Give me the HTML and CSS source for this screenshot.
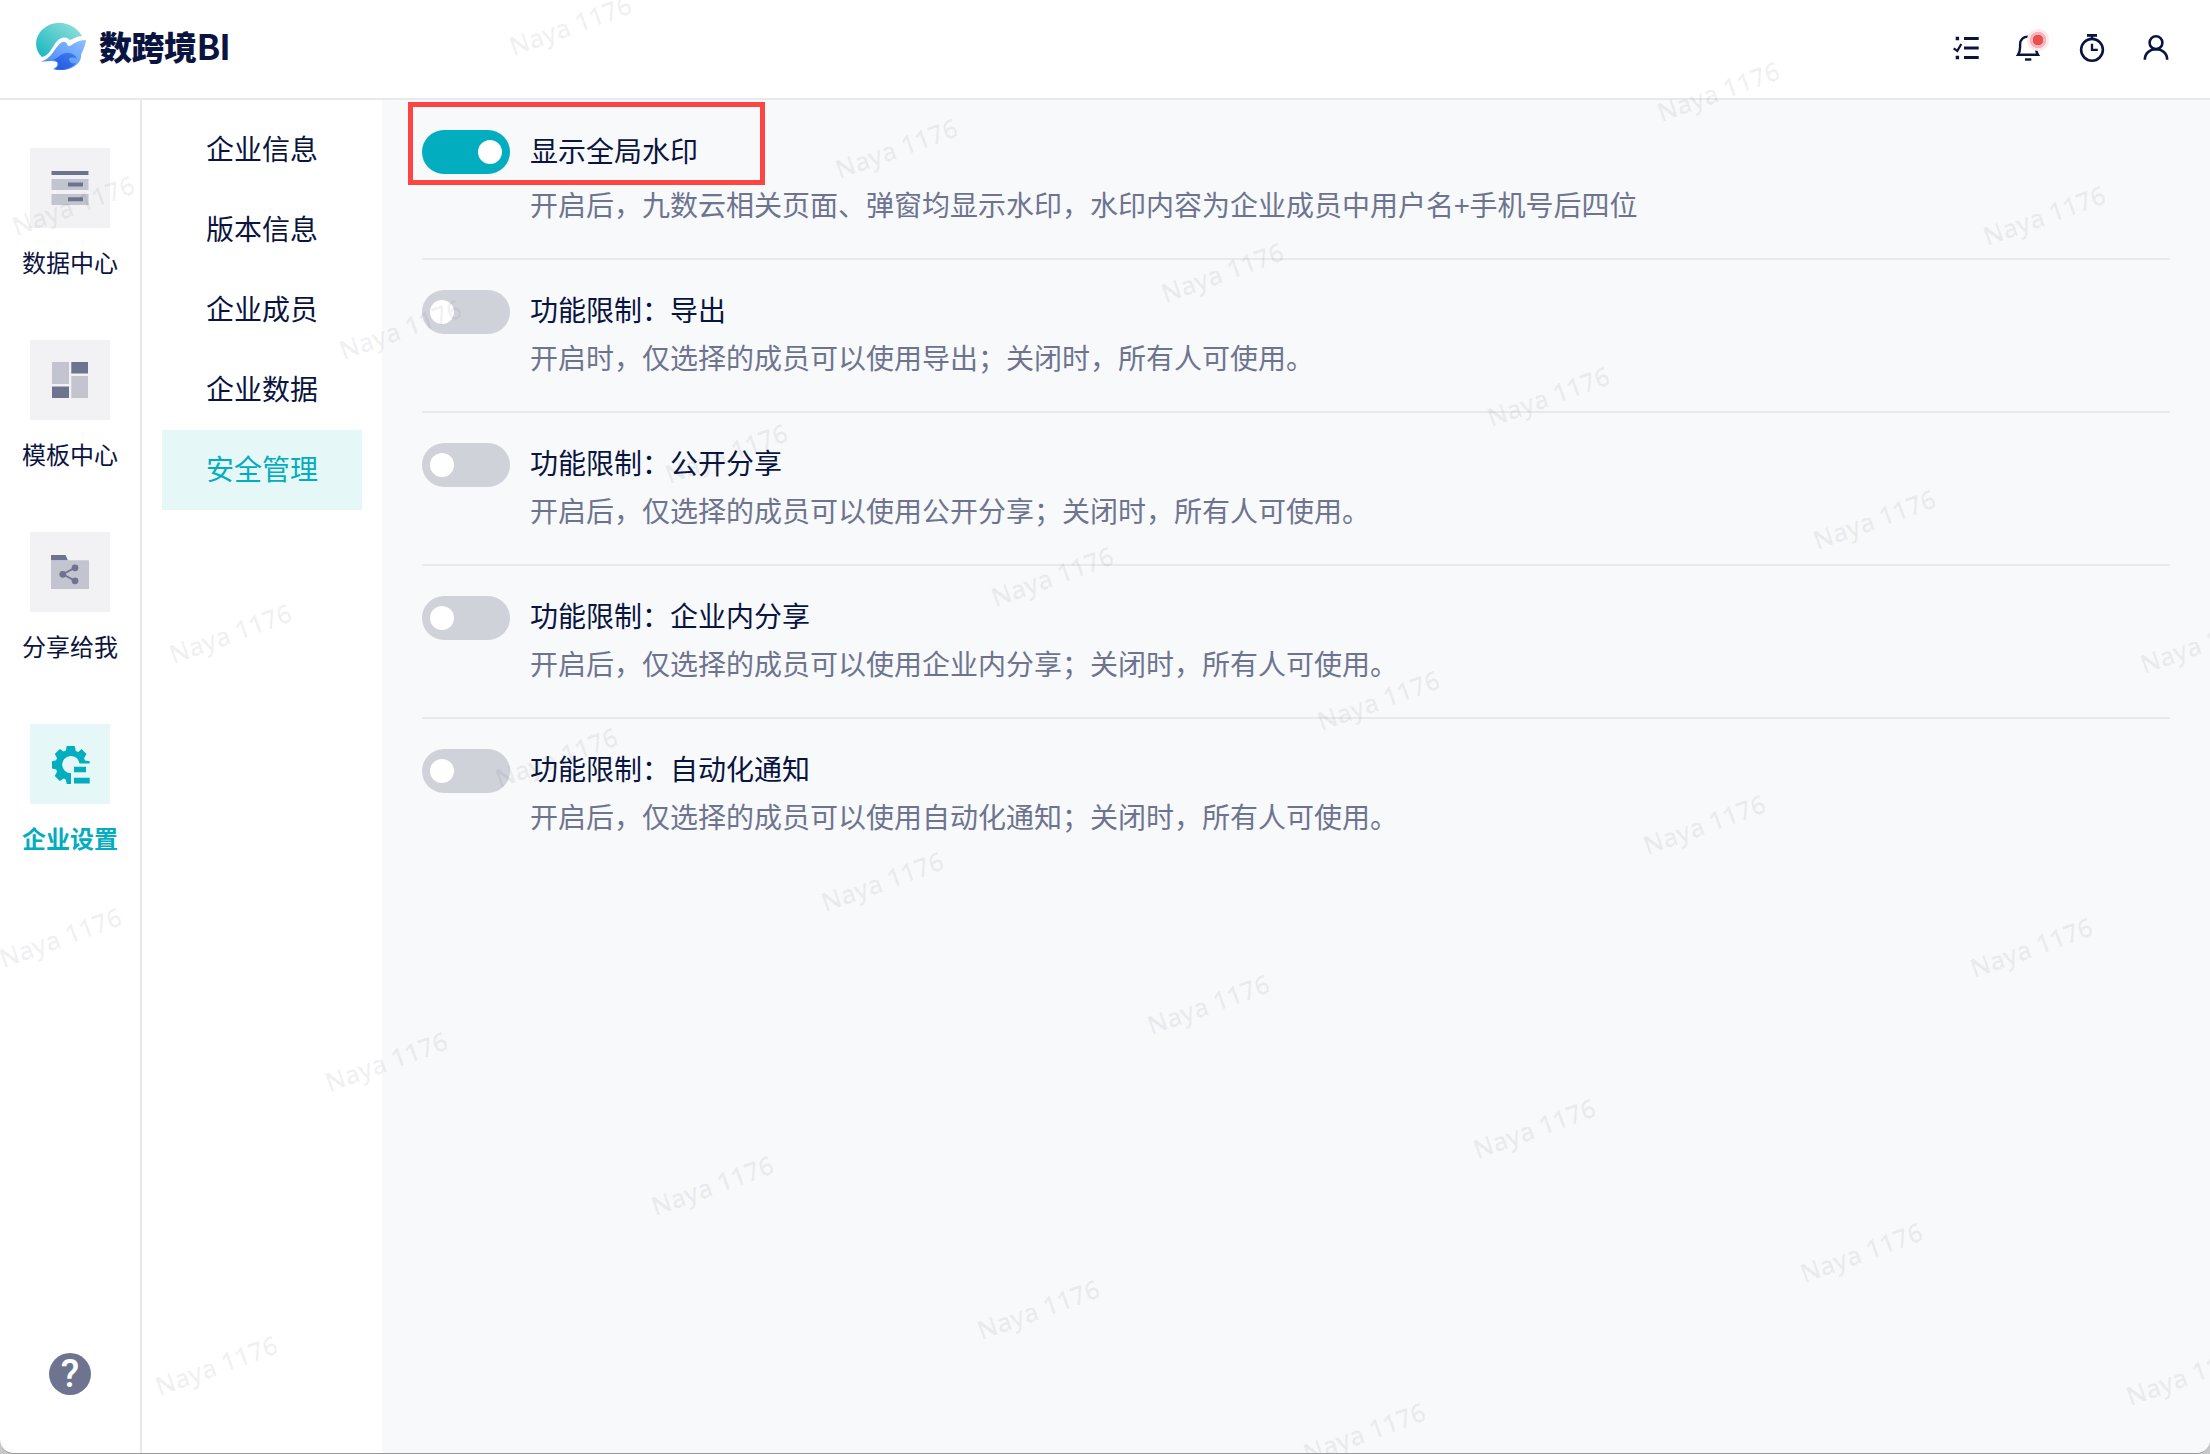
FILE: index.html
```html
<!DOCTYPE html>
<html lang="zh-CN">
<head>
    <meta charset="UTF-8">
    <meta name="viewport" content="width=device-width, initial-scale=1.0">
    <title>数跨境BI</title>
    <link rel="stylesheet" href="styles.css">
</head>
<body>
    <div class="window">
        <header class="header">
            <div class="logo">
                <svg class="logo-mark" viewBox="0 0 52 50">
                    <defs>
                        <linearGradient id="sky" x1="0" y1="1" x2="1" y2="0">
                            <stop offset="0" stop-color="#12b5c0"></stop>
                            <stop offset="1" stop-color="#9be3dc"></stop>
                        </linearGradient>
                        <linearGradient id="wave" x1="0" y1="1" x2="1" y2="0">
                            <stop offset="0" stop-color="#3b83f7"></stop>
                            <stop offset="1" stop-color="#8fc0ff"></stop>
                        </linearGradient>
                        <linearGradient id="deep" x1="0" y1="1" x2="1" y2="0">
                            <stop offset="0" stop-color="#2456e0"></stop>
                            <stop offset="1" stop-color="#3f7df0"></stop>
                        </linearGradient>
                    </defs>
                    <path d="M7 35 C-1 28 -1 15 8 7 C20 -4 39 0 47 14 C42 14 38 17 35 18 C31 14 26 15 22 19 C17 25 15 33 7 35 Z" fill="url(#sky)"></path>
                    <path d="M6 39.5 C16 37 19 27 25 21.5 C29 18 32 20 33 24 C36 25 40 18 51 18 C50 25 48 28 46 33 C47 41 37 48 27 48 C22 48 20 48 18 47 C22 45 23 43 22 40 C17 38 12 40 6 39.5 Z" fill="url(#wave)"></path>
                    <path d="M18 38 C24 36 25 31 33 31 C38 31 41 34 42 37 C38 35 34 35 34 38 C35 41 38 42 41 41 C36 47 28 49 20 47 C25 44 25 40 18 38 Z" fill="url(#deep)"></path>
                </svg>
                <span class="logo-text">数跨境<span class="logo-latin">BI</span></span>
            </div>
            <div class="tools">
                <svg class="tool-icon" viewBox="0 0 30 30">
                    <path d="M15 5.5H29.7 M15 15H29.7 M15 24.5H29.7" stroke="#0a1440" stroke-width="3.2"></path>
                    <path d="M6.7 3.8h3.4v3.4H6.7z M6.7 22.8h3.4v3.4H6.7z" fill="#0a1440"></path>
                    <path d="M4.7 15.3L8.3 17.8L12.3 11" fill="none" stroke="#0a1440" stroke-width="2.2"></path>
                </svg>
                <div class="bell">
                    <svg class="tool-icon" viewBox="0 0 30 30">
                        <path d="M5 21.8H25C23.5 19.5 22.9 17 22.9 14V11.5C22.9 6.5 19.5 3.6 15 3.6S7.1 6.5 7.1 11.5V14C7.1 17 6.5 19.5 5 21.8Z" fill="none" stroke="#0a1440" stroke-width="2.4"></path>
                        <path d="M12 26.5H18.3" stroke="#0a1440" stroke-width="2.4"></path>
                    </svg>
                    <span class="bell-dot"></span>
                </div>
                <svg class="tool-icon" viewBox="0 0 30 30">
                    <circle cx="15" cy="16.8" r="10.9" fill="none" stroke="#0a1440" stroke-width="2.6"></circle>
                    <path d="M10 2.4H20" fill="none" stroke="#0a1440" stroke-width="2.8"></path>
                    <path d="M15 3V6 M15 10.8V16.8H20.8" fill="none" stroke="#0a1440" stroke-width="2.3"></path>
                </svg>
                <svg class="tool-icon" viewBox="0 0 30 30">
                    <circle cx="15" cy="9.7" r="6.4" fill="none" stroke="#0a1440" stroke-width="2.6"></circle>
                    <path d="M3.8 26.8C3.8 20 9 16.2 15 16.2S26.2 20 26.2 26.8" fill="none" stroke="#0a1440" stroke-width="2.6"></path>
                </svg>
            </div>
        </header>

        <div class="body">
            <nav class="rail">
                <a class="rail-item">
                    <span class="rail-icon">
                        <svg viewBox="0 0 40 40">
                            <path d="M1.5 3H38.5V7H1.5z" fill="#6e748f"></path>
                            <path d="M1.5 11H38.5V22H1.5z M1.5 26H38.5V37H1.5z" fill="#c2c4d0"></path>
                            <path d="M18 14.5H33V18.5H18z M18 29.3H33V33.3H18z" fill="#6e748f"></path>
                        </svg>
                    </span>
                    <span class="rail-label">数据中心</span>
                </a>
                <a class="rail-item">
                    <span class="rail-icon">
                        <svg viewBox="0 0 40 40">
                            <path d="M2 2H19V24H2z M21.3 16H38V38H21.3z" fill="#c2c4d0"></path>
                            <path d="M21.3 2H38V13.6H21.3z M2 26.5H19V38H2z" fill="#6e748f"></path>
                        </svg>
                    </span>
                    <span class="rail-label">模板中心</span>
                </a>
                <a class="rail-item">
                    <span class="rail-icon">
                        <svg viewBox="0 0 40 40">
                            <path d="M1 3H15.5L18 8.5H1z" fill="#6e748f"></path>
                            <path d="M1 8.3H39V37H1z" fill="#c2c4d0"></path>
                            <path d="M25 15.8L12.8 22.3L25 28.8" fill="none" stroke="#6e748f" stroke-width="1.8"></path>
                            <circle cx="25" cy="15.8" r="3.4" fill="#6e748f"></circle>
                            <circle cx="12.8" cy="22.3" r="3.4" fill="#6e748f"></circle>
                            <circle cx="25" cy="28.8" r="3.4" fill="#6e748f"></circle>
                        </svg>
                    </span>
                    <span class="rail-label">分享给我</span>
                </a>
                <a class="rail-item active">
                    <span class="rail-icon">
                        <svg viewBox="0 0 40 40">
                            <path fill="#02adbf" d="M16.7 2H24.7L25.8 7L28.3 8L31.6 5L36.5 10L34 14.3L35 16.5L39.7 17.3V19.5H29.5A8.7 8.7 0 1 0 21 29.3V40H16.7L15.8 35.5L13.5 34.5L9.8 37L4.8 32L7 27.8L6.2 25.5L2 24.5V17.3L6.2 16.3L7 14L4.8 10L9.8 5L13.5 7.5L15.8 6.5Z"></path>
                            <path fill="#02adbf" d="M24 22.8H36V28.3H24z M24 33.8H39.7V39.5H24z"></path>
                        </svg>
                    </span>
                    <span class="rail-label">企业设置</span>
                </a>
                <div class="help">?</div>
            </nav>

            <nav class="menu">
                <a class="menu-item">企业信息</a>
                <a class="menu-item">版本信息</a>
                <a class="menu-item">企业成员</a>
                <a class="menu-item">企业数据</a>
                <a class="menu-item active">安全管理</a>
            </nav>

            <main class="content">
                <section class="setting first">
                    <span class="switch on"></span>
                    <div class="setting-text">
                        <div class="setting-title">显示全局水印</div>
                        <div class="setting-desc">开启后，九数云相关页面、弹窗均显示水印，水印内容为企业成员中用户名+手机号后四位</div>
                    </div>
                    <div class="highlight"></div>
                </section>
                <section class="setting">
                    <span class="switch"></span>
                    <div class="setting-text">
                        <div class="setting-title">功能限制：导出</div>
                        <div class="setting-desc">开启时，仅选择的成员可以使用导出；关闭时，所有人可使用。</div>
                    </div>
                </section>
                <section class="setting">
                    <span class="switch"></span>
                    <div class="setting-text">
                        <div class="setting-title">功能限制：公开分享</div>
                        <div class="setting-desc">开启后，仅选择的成员可以使用公开分享；关闭时，所有人可使用。</div>
                    </div>
                </section>
                <section class="setting">
                    <span class="switch"></span>
                    <div class="setting-text">
                        <div class="setting-title">功能限制：企业内分享</div>
                        <div class="setting-desc">开启后，仅选择的成员可以使用企业内分享；关闭时，所有人可使用。</div>
                    </div>
                </section>
                <section class="setting">
                    <span class="switch"></span>
                    <div class="setting-text">
                        <div class="setting-title">功能限制：自动化通知</div>
                        <div class="setting-desc">开启后，仅选择的成员可以使用自动化通知；关闭时，所有人可使用。</div>
                    </div>
                </section>
            </main>
        </div>

        <div class="watermark" id="watermark"></div>
    </div>

    <script>
        // Fill the page with the user's watermark on a slanted grid
        const layer = document.getElementById('watermark');
        const text = 'Naya 1176';

        for (let row = -1; row < 6; row++) {
            for (let col = -3; col < 9; col++) {
                const x = 569.5 + col * 326.2 - row * 170;
                const y = 24.5 + col * 123.7 + row * 304.3;
                if (x < -70 || x > 2280 || y < 0 || y > 1470) continue;

                const mark = document.createElement('span');
                mark.textContent = text;
                mark.style.left = x + 'px';
                mark.style.top = y + 'px';
                layer.appendChild(mark);
            }
        }
    </script>
</body>
</html>
```

FILE: styles.css
```css
* {
    box-sizing: border-box;
}

body {
    margin: 0;
    background: #c8c8ca;
    font-family: "Noto Sans CJK SC", sans-serif;
    color: #0a1440;
}

.window {
    position: relative;
    display: flex;
    flex-direction: column;
    height: 1454px;
    overflow: hidden;
    background: #fff;
    border-bottom: 1px solid #999;
    border-radius: 0 0 14px 14px;
}

.header {
    display: flex;
    align-items: center;
    justify-content: space-between;
    height: 100px;
    padding: 0 39px 2px 35px;
    border-bottom: 2px solid #e8e9ed;
}

.logo {
    display: flex;
    align-items: center;
    gap: 12px;
    margin-bottom: 2px;
}

.logo-mark {
    width: 52px;
    height: 50px;
}

.logo-text {
    margin-bottom: 3px;
    font-size: 33px;
    font-weight: 900;
    line-height: 40px;
    letter-spacing: -0.5px;
}

.logo-latin {
    font-weight: 700;
    font-size: 35px;
    letter-spacing: -1px;
}

.tools {
    display: flex;
    align-items: center;
    gap: 34px;
}

.tool-icon {
    display: block;
    width: 30px;
    height: 30px;
}

.bell {
    position: relative;
}

.bell-dot {
    position: absolute;
    top: -4px;
    right: -6px;
    width: 22px;
    height: 22px;
    border-radius: 50%;
    background: radial-gradient(circle, #e85050 5px, #f5b5b8 5.5px, #f5b5b8 8px, #fce8e9 8.5px);
}

.body {
    display: flex;
    flex: 1;
}

.rail {
    display: flex;
    flex-direction: column;
    align-items: center;
    width: 142px;
    padding: 48px 0 58px;
    border-right: 2px solid #e8e8f0;
}

.rail-item {
    display: flex;
    flex-direction: column;
    align-items: center;
    height: 192px;
}

.rail-icon {
    display: flex;
    align-items: center;
    justify-content: center;
    width: 80px;
    height: 80px;
    background: #f2f2f5;
}

.rail-icon svg {
    width: 40px;
    height: 40px;
}

.rail-label {
    margin-top: 16px;
    font-size: 24px;
    line-height: 36px;
}

.rail-item.active .rail-icon {
    background: #e5f7f6;
}

.rail-item.active .rail-label {
    font-weight: 700;
    color: #02adbf;
}

.help {
    width: 42px;
    height: 42px;
    margin-top: auto;
    border-radius: 50%;
    background: #6e748f;
    color: #fff;
    font-family: Roboto, sans-serif;
    font-size: 38px;
    font-weight: 500;
    line-height: 43px;
    text-align: center;
}

.menu {
    width: 240px;
    padding: 10px 20px;
}

.menu-item {
    display: block;
    height: 80px;
    font-size: 28px;
    line-height: 77px;
    text-align: center;
}

.menu-item.active {
    background: #e5f7f6;
    color: #02adbf;
}

.content {
    flex: 1;
    padding: 0 40px;
    background: #f7f9fb;
}

.setting {
    position: relative;
    display: flex;
    gap: 20px;
    height: 153px;
    padding-top: 30px;
    border-bottom: 2px solid #e8e9eb;
}

.setting.first {
    height: 160px;
}

.setting:last-child {
    border-bottom: none;
}

.switch {
    display: flex;
    flex: none;
    width: 88px;
    height: 44px;
    padding: 10px 8px;
    border-radius: 22px;
    background: #d0d2da;
}

.switch::before {
    content: "";
    width: 24px;
    height: 24px;
    border-radius: 50%;
    background: #fff;
}

.switch.on {
    justify-content: flex-end;
    background: #02adbf;
}

.setting-text {
    font-size: 28px;
    line-height: 42px;
}

.setting-title {
    margin-top: -2px;
}

.setting-desc {
    margin-top: 6px;
    color: #6e748f;
}

.first .setting-title {
    margin-top: -1px;
}

.first .setting-desc {
    margin-top: 12px;
}

/* red frame round the switch being explained */
.highlight {
    position: absolute;
    top: 2px;
    left: -14px;
    width: 357px;
    height: 83px;
    border: 5px solid #ff4444;
}

.watermark {
    position: absolute;
    inset: 0;
    overflow: hidden;
    pointer-events: none;
}

.watermark span {
    position: absolute;
    font-family: "Open Sans", "Noto Sans", sans-serif;
    font-size: 25.5px;
    font-weight: 600;
    line-height: 36px;
    white-space: nowrap;
    color: rgba(20, 24, 50, 0.06);
    -webkit-text-stroke: 0.6px rgba(20, 24, 50, 0.05);
    transform: translate(-50%, -50%) rotate(-20deg);
}
```
